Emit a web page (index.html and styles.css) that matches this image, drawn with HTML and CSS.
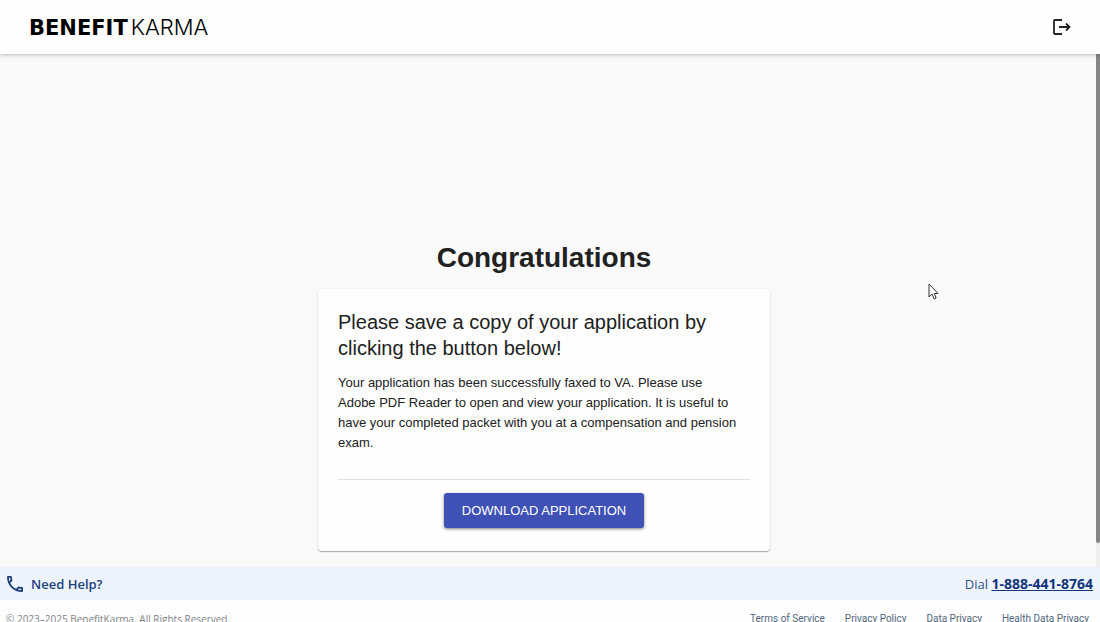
FILE: index.html
```html
<!DOCTYPE html>
<html lang="en">
<head>
<meta charset="utf-8">
<meta name="viewport" content="width=device-width, initial-scale=1">
<title>BenefitKarma</title>
<link rel="stylesheet" href="styles.css">
</head>
<body>
<header class="header">
  <a class="logo" href="#"><span class="logo-strong">BENEFIT</span><span class="logo-light">KARMA</span></a>
  <button class="logout" type="button" aria-label="Log out">
    <svg viewBox="0 0 18 16" width="18" height="16" fill="none" stroke="currentColor" stroke-width="1.8"><path d="M9 1H2Q1 1 1 2v12q0 1 1 1h7M6 8h10M13 4.500 16.500 8 13 11.500"/></svg>
  </button>
</header>
<div class="viewport">
  <main class="content">
    <h1 class="title">Congratulations</h1>
    <section class="card">
      <h2 class="card-title">Please save a copy of your application by clicking the button below!</h2>
      <p class="card-text">Your application has been successfully faxed to VA. Please use<br>Adobe PDF Reader to open and view your application. It is useful to<br>have your completed packet with you at a compensation and pension<br>exam.</p>
      <div class="card-actions"><button class="download" type="button">DOWNLOAD APPLICATION</button></div>
    </section>
  </main>
  <div class="track"><div class="thumb"></div></div>
</div>
<aside class="help">
  <svg class="phone" viewBox="3 3 18 18" width="16" height="16" fill="currentColor"><path d="M6.54 5c.06.89.21 1.76.45 2.59l-1.2 1.2c-.41-1.2-.67-2.47-.76-3.79h1.51m9.86 12.02c.85.24 1.72.39 2.6.45v1.49c-1.32-.09-2.59-.35-3.8-.75l1.2-1.19M7.5 3H4c-.55 0-1 .45-1 1 0 9.39 7.61 17 17 17 .55 0 1-.45 1-1v-3.49c0-.55-.45-1-1-1-1.24 0-2.45-.2-3.57-.57-.1-.04-.21-.05-.31-.05-.26 0-.51.1-.71.29l-2.2 2.2c-2.83-1.45-5.15-3.76-6.59-6.59l2.2-2.2c.28-.28.36-.67.25-1.02C8.7 6.45 8.5 5.25 8.5 4c0-.55-.45-1-1-1z"/></svg>
  <span class="help-label">Need Help?</span>
  <span class="dial">Dial <a class="dial-link" href="tel:18884418764">1-888-441-8764</a></span>
</aside>
<footer class="footer">
  <span>© 2023–2025 BenefitKarma. All Rights Reserved.</span>
  <nav class="footer-nav">
    <a href="#">Terms of Service</a>
    <a href="#">Privacy Policy</a>
    <a href="#">Data Privacy</a>
    <a href="#">Health Data Privacy</a>
  </nav>
</footer>
<svg class="cursor" viewBox="0 0 12 18" width="12" height="18" fill="#fff" stroke="#333" stroke-width="1"><path d="M1 1v13l3-3 2.2 5 2-1L6.200 10.500H10z"/></svg>
</body>
</html>
```
FILE: styles.css
```css
* { box-sizing: border-box; }
html { height: 100%; overflow: hidden; }
body {
  margin: 0;
  height: calc(100% + 12px);
  display: flex;
  flex-direction: column;
  background: #fefefe;
  color: #212121;
  font-family: "Liberation Sans", Arial, sans-serif;
}
.header {
  display: flex;
  align-items: center;
  justify-content: space-between;
  height: 54px;
  flex: none;
  padding: 0 29px;
  background: #fefefe;
  box-shadow: 0 1px 4px rgba(0, 0, 0, 0.25);
  z-index: 1;
}
.logo {
  display: flex;
  align-items: baseline;
  gap: 3px;
  color: #000;
  line-height: 24px;
  text-decoration: none;
}
.logo-strong { font-family: "DejaVu Sans", sans-serif; font-size: 21px; font-weight: 700; }
.logo-light { font-family: Inter, sans-serif; font-size: 22px; font-weight: 300; }
.logout {
  display: flex;
  padding: 0;
  border: 0;
  background: none;
  color: #222;
}
.viewport { flex: 1; display: flex; background: #f9f9f9; }
.content {
  flex: 1;
  display: flex;
  flex-direction: column;
  align-items: center;
  justify-content: flex-end;
  padding: 0 8px 16px 0;
}
.title { margin: 0 0 13px; font-size: 28px; line-height: 36px; }
.card {
  width: 452px;
  max-width: 100%;
  padding: 20px 20px 23px;
  border-radius: 4px;
  background: #fefefe;
  box-shadow: 0 1px 1px rgba(0, 0, 0, 0.3), 0 0 2px rgba(0, 0, 0, 0.1);
}
.card-title { margin: 0 0 12px; font-size: 20px; font-weight: 400; line-height: 26px; }
.card-text { margin: 0 0 26px; font-size: 13px; line-height: 20px; }
.card-actions {
  display: flex;
  justify-content: center;
  padding-top: 13px;
  border-top: 1px solid #e0e2e6;
}
.download {
  padding: 0 18px;
  border: 0;
  border-radius: 3px;
  background: #3f51b5;
  color: #fff;
  font: 13px/35px "Liberation Sans", Arial, sans-serif;
  box-shadow: 0 1px 3px rgba(0, 0, 0, 0.5);
}
.track { width: 4px; background: #efefef; }
.thumb { height: calc(100% - 24px); border-radius: 0 0 2px 2px; background: #858585; }
.help {
  display: flex;
  align-items: center;
  flex: none;
  height: 33px;
  padding: 0 7px;
  background: #edf4fe;
  color: #1c3f7c;
  font-family: "Open Sans", "Noto Sans", sans-serif;
  font-size: 13px;
}
.help-label { margin-left: 8px; font-weight: 600; }
.dial { margin-left: auto; color: #35527f; }
.dial-link { color: #12357a; font-family: "Noto Sans", sans-serif; font-size: 14px; font-weight: 700; }
.footer {
  display: flex;
  justify-content: space-between;
  flex: none;
  height: 34px;
  padding: 11px 11px 0 6px;
  color: #808489;
  font-family: "Open Sans", "Noto Sans", sans-serif;
  font-size: 10px;
  line-height: 16px;
}
.footer-nav { display: flex; gap: 20px; font-family: Roboto, sans-serif; }
.footer-nav a { color: #52657c; text-decoration: none; }
.cursor { position: absolute; left: 928px; top: 283px; z-index: 2; }
```
